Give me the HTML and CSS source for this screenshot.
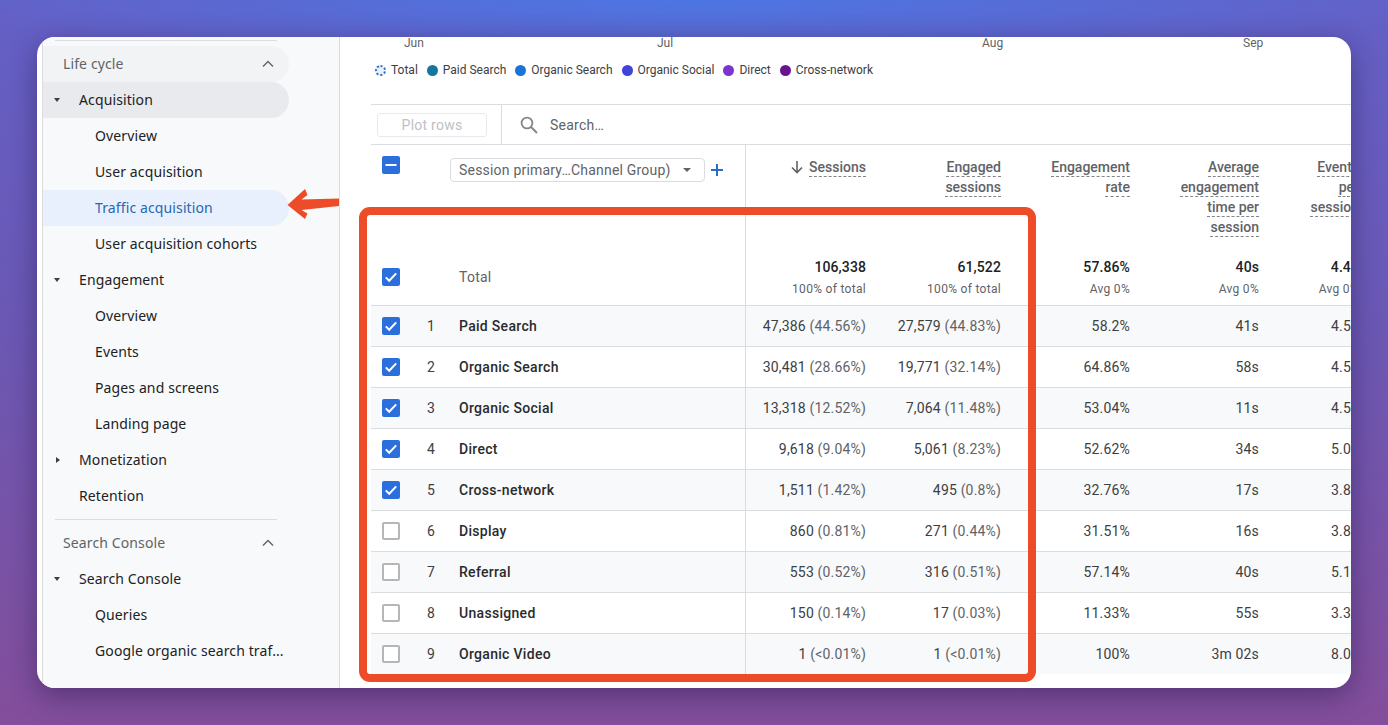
FILE: index.html
```html
<!DOCTYPE html>
<html>
<head>
  <meta charset="utf-8">
  <title>Traffic acquisition</title>
  <link rel="stylesheet" href="styles.css">
</head>
<body>

<svg width="0" height="0" class="defs">
  <symbol id="box-on" viewBox="0 0 18 18">
    <rect width="18" height="18" rx="2" fill="#2a6fdb"/>
    <path d="M3.8 9.4l3.4 3.4 7-7.4" fill="none" stroke="#fff" stroke-width="2"/>
  </symbol>
  <symbol id="box-mixed" viewBox="0 0 18 18">
    <rect width="18" height="18" rx="2" fill="#2a6fdb"/>
    <path d="M3.5 8h11v2h-11z" fill="#fff"/>
  </symbol>
  <symbol id="box-off" viewBox="0 0 18 18">
    <rect x="1" y="1" width="16" height="16" rx="1" fill="#fff" stroke="#b4b6b8" stroke-width="2"/>
  </symbol>
  <symbol id="chev-up" viewBox="0 0 12 8">
    <path d="M1 6.5l5-5 5 5" fill="none" stroke="#5f6368" stroke-width="1.4"/>
  </symbol>
</svg>

<div class="card">

  <aside class="sidebar">
    <div class="rule rule-top"></div>
    <div class="nav-row section section-open">Life cycle <svg class="chev"><use href="#chev-up"/></svg></div>
    <div class="nav-row level current"><span class="caret caret-down"></span>Acquisition</div>
    <div class="nav-row sub">Overview</div>
    <div class="nav-row sub">User acquisition</div>
    <div class="nav-row sub active">Traffic acquisition</div>
    <div class="nav-row sub">User acquisition cohorts</div>
    <div class="nav-row level"><span class="caret caret-down"></span>Engagement</div>
    <div class="nav-row sub">Overview</div>
    <div class="nav-row sub">Events</div>
    <div class="nav-row sub">Pages and screens</div>
    <div class="nav-row sub">Landing page</div>
    <div class="nav-row level"><span class="caret caret-right"></span>Monetization</div>
    <div class="nav-row level"><span class="caret"></span>Retention</div>
    <div class="rule rule-mid"></div>
    <div class="nav-row section">Search Console <svg class="chev"><use href="#chev-up"/></svg></div>
    <div class="nav-row level"><span class="caret caret-down"></span>Search Console</div>
    <div class="nav-row sub">Queries</div>
    <div class="nav-row sub">Google organic search traf...</div>
  </aside>

  <main class="main">
    <div class="months">
      <span>Jun</span>
      <span>Jul</span>
      <span>Aug</span>
      <span>Sep</span>
    </div>

    <div class="legend">
      <span class="legend-item"><i class="dot dot-total"></i>Total</span>
      <span class="legend-item"><i class="dot dot-paid"></i>Paid Search</span>
      <span class="legend-item"><i class="dot dot-organic"></i>Organic Search</span>
      <span class="legend-item"><i class="dot dot-social"></i>Organic Social</span>
      <span class="legend-item"><i class="dot dot-direct"></i>Direct</span>
      <span class="legend-item"><i class="dot dot-cross"></i>Cross-network</span>
    </div>

    <div class="report">
      <div class="toolbar">
        <div class="toolbar-left"><button class="plot-btn">Plot rows</button></div>
        <div class="search">
          <svg class="search-icon" viewBox="0 0 18 18"><circle cx="7" cy="7" r="5.4" fill="none" stroke="#80868b" stroke-width="1.8"/><path d="M11 11l6 6" stroke="#80868b" stroke-width="2"/></svg>
          Search…
        </div>
      </div>

      <div class="grid head">
        <div class="dim dim-head">
          <svg class="box box-head"><use href="#box-mixed"/></svg>
          <div class="select">Session primary…Channel Group) <span class="select-caret"></span></div>
          <svg class="plus" viewBox="0 0 14 14"><path d="M6 1h2v5h5v2h-5v5h-2v-5h-5v-2h5z" fill="#2a6fc4"/></svg>
        </div>
        <div class="col-title"><svg class="sort" viewBox="0 0 14 14"><path d="M7 1v11M2 7.5l5 5 5-5" fill="none" stroke="#5f6368" stroke-width="1.6"/></svg><u>Sessions</u></div>
        <div class="col-title"><u>Engaged</u><br><u>sessions</u></div>
        <div class="col-title"><u>Engagement</u><br><u>rate</u></div>
        <div class="col-title"><u>Average</u><br><u>engagement</u><br><u>time per</u><br><u>session</u></div>
        <div class="col-title"><u>Events</u><br><u>per</u><br><u>session</u></div>
      </div>

      <div class="grid total">
        <div class="dim"><svg class="box"><use href="#box-on"/></svg><span class="num"></span><span class="total-label">Total</span></div>
        <div class="sum">106,338<small>100% of total</small></div>
        <div class="sum">61,522<small>100% of total</small></div>
        <div class="sum">57.86%<small>Avg 0%</small></div>
        <div class="sum">40s<small>Avg 0%</small></div>
        <div class="sum">4.43<small>Avg 0%</small></div>
      </div>

      <div class="grid row shade">
        <div class="dim"><svg class="box"><use href="#box-on"/></svg><span class="num">1</span><span class="name">Paid Search</span></div>
        <div class="val">47,386 <em>(44.56%)</em></div>
        <div class="val">27,579 <em>(44.83%)</em></div>
        <div class="val">58.2%</div>
        <div class="val">41s</div>
        <div class="val">4.51</div>
      </div>
      <div class="grid row">
        <div class="dim"><svg class="box"><use href="#box-on"/></svg><span class="num">2</span><span class="name">Organic Search</span></div>
        <div class="val">30,481 <em>(28.66%)</em></div>
        <div class="val">19,771 <em>(32.14%)</em></div>
        <div class="val">64.86%</div>
        <div class="val">58s</div>
        <div class="val">4.54</div>
      </div>
      <div class="grid row shade">
        <div class="dim"><svg class="box"><use href="#box-on"/></svg><span class="num">3</span><span class="name">Organic Social</span></div>
        <div class="val">13,318 <em>(12.52%)</em></div>
        <div class="val">7,064 <em>(11.48%)</em></div>
        <div class="val">53.04%</div>
        <div class="val">11s</div>
        <div class="val">4.52</div>
      </div>
      <div class="grid row">
        <div class="dim"><svg class="box"><use href="#box-on"/></svg><span class="num">4</span><span class="name">Direct</span></div>
        <div class="val">9,618 <em>(9.04%)</em></div>
        <div class="val">5,061 <em>(8.23%)</em></div>
        <div class="val">52.62%</div>
        <div class="val">34s</div>
        <div class="val">5.03</div>
      </div>
      <div class="grid row shade">
        <div class="dim"><svg class="box"><use href="#box-on"/></svg><span class="num">5</span><span class="name">Cross-network</span></div>
        <div class="val">1,511 <em>(1.42%)</em></div>
        <div class="val">495 <em>(0.8%)</em></div>
        <div class="val">32.76%</div>
        <div class="val">17s</div>
        <div class="val">3.82</div>
      </div>
      <div class="grid row">
        <div class="dim"><svg class="box"><use href="#box-off"/></svg><span class="num">6</span><span class="name">Display</span></div>
        <div class="val">860 <em>(0.81%)</em></div>
        <div class="val">271 <em>(0.44%)</em></div>
        <div class="val">31.51%</div>
        <div class="val">16s</div>
        <div class="val">3.85</div>
      </div>
      <div class="grid row shade">
        <div class="dim"><svg class="box"><use href="#box-off"/></svg><span class="num">7</span><span class="name">Referral</span></div>
        <div class="val">553 <em>(0.52%)</em></div>
        <div class="val">316 <em>(0.51%)</em></div>
        <div class="val">57.14%</div>
        <div class="val">40s</div>
        <div class="val">5.12</div>
      </div>
      <div class="grid row">
        <div class="dim"><svg class="box"><use href="#box-off"/></svg><span class="num">8</span><span class="name">Unassigned</span></div>
        <div class="val">150 <em>(0.14%)</em></div>
        <div class="val">17 <em>(0.03%)</em></div>
        <div class="val">11.33%</div>
        <div class="val">55s</div>
        <div class="val">3.31</div>
      </div>
      <div class="grid row shade">
        <div class="dim"><svg class="box"><use href="#box-off"/></svg><span class="num">9</span><span class="name">Organic Video</span></div>
        <div class="val">1 <em>(&lt;0.01%)</em></div>
        <div class="val">1 <em>(&lt;0.01%)</em></div>
        <div class="val">100%</div>
        <div class="val">3m 02s</div>
        <div class="val">8.00</div>
      </div>
    </div>
  </main>

  <!-- annotations drawn over the screenshot -->
  <div class="highlight"></div>
  <svg class="arrow" viewBox="0 0 56 34"><path d="M2.500 18L20 2l2.500 6-6 4.500L54 11.500V19l-37.500 4 6 3.500L20 32z" fill="#ec4c27"/></svg>
</div>

</body>
</html>
```

FILE: styles.css
```css
html, body {
  margin: 0;
  height: 725px;
  overflow: hidden;
}

body {
  padding: 37px;
  box-sizing: border-box;
  font-family: Roboto, "Liberation Sans", sans-serif;
  font-size: 14px;
  color: #202124;
  background:
    radial-gradient(ellipse 55% 60px at 50% 0, #4c76e4 0, rgba(76, 118, 228, 0) 100%),
    linear-gradient(180deg, #6460c6 0, #6b58b4 45%, #834e9b 100%);
}

.defs {
  position: absolute;
}

.card {
  position: relative;
  display: flex;
  width: 1314px;
  height: 651px;
  background: #fff;
  border-radius: 18px;
  overflow: hidden;
  box-shadow: 0 8px 28px rgba(30, 20, 70, 0.45);
}

/* sidebar */
.sidebar {
  flex: none;
  box-sizing: border-box;
  width: 298px;
  margin-left: 5px;
  padding-top: 3px;
  background: #f8f9fa;
  border-left: 1px solid #dadce0;
  border-right: 1px solid #dadce0;
  font-family: "Noto Sans", Roboto, sans-serif;
  font-size: 14px;
  letter-spacing: 0.12px;
}

.rule {
  width: 222px;
  height: 1px;
  margin-left: 12px;
  background: #dadce0;
}

.rule-top {
  margin-bottom: 5px;
}

.rule-mid {
  margin-top: 5px;
  margin-bottom: 5px;
}

.nav-row {
  display: flex;
  align-items: center;
  box-sizing: border-box;
  width: 246px;
  height: 36px;
  padding-bottom: 2px;
  border-radius: 0 18px 18px 0;
  white-space: nowrap;
  color: #202124;
}

.section {
  padding-left: 20px;
  color: #5f6368;
}

.section-open {
  background: #f2f3f5;
}

.chev {
  width: 12px;
  height: 8px;
  margin-top: 2px;
  margin-left: auto;
  margin-right: 15px;
}

.level {
  padding-left: 11px;
}

.current {
  background: #e8eaed;
}

.sub {
  padding-left: 52px;
}

.active {
  background: #e8f0fe;
  color: #2b66b1;
}

.caret {
  flex: none;
  box-sizing: border-box;
  width: 25px;
  height: 0;
}

.caret-down {
  position: relative;
}

.caret-down::before {
  content: "";
  position: absolute;
  left: 0;
  top: -1px;
  border-left: 3.5px solid transparent;
  border-right: 3.5px solid transparent;
  border-top: 4px solid #3c4043;
}

.caret-right {
  position: relative;
}

.caret-right::before {
  content: "";
  position: absolute;
  left: 2px;
  top: -2.5px;
  border-top: 3.5px solid transparent;
  border-bottom: 3.5px solid transparent;
  border-left: 4px solid #3c4043;
}

/* chart footer */
.main {
  flex: 1;
  min-width: 0;
  overflow: hidden;
}

.months {
  display: grid;
  grid-template-columns: 253px 325px 261px auto;
  height: 13px;
  padding-left: 64px;
  font-size: 12px;
  line-height: 13px;
  color: #5f6368;
}

.legend {
  display: flex;
  align-items: center;
  height: 20px;
  margin: 10px 0 24px 35px;
  font-size: 12px;
  color: #3c4043;
}

.legend-item {
  display: flex;
  align-items: center;
  margin-right: 9px;
  white-space: nowrap;
}

.dot {
  width: 11px;
  height: 11px;
  margin-right: 5px;
  border-radius: 50%;
}

.dot-total {
  box-sizing: border-box;
  border: 2px dotted #2a6fc4;
  background: #e8f0fe;
}

.dot-paid { background: #12769e; }
.dot-organic { background: #1a73d9; }
.dot-social { background: #4144d4; }
.dot-direct { background: #7b35d0; }
.dot-cross { background: #6a1390; }

/* table */
.report {
  width: 990px;
  margin-left: 31px;
  border-top: 1px solid #dadce0;
}

.toolbar {
  display: flex;
  height: 39px;
  border-bottom: 1px solid #dadce0;
}

.toolbar-left {
  display: flex;
  align-items: center;
  box-sizing: border-box;
  width: 131px;
  padding-left: 6px;
  border-right: 1px solid #dadce0;
}

.plot-btn {
  width: 110px;
  height: 24px;
  padding: 0;
  background: #fff;
  border: 1px solid #e8eaed;
  border-radius: 3px;
  font-family: inherit;
  font-size: 14px;
  letter-spacing: 0.25px;
  color: #bdc1c6;
}

.search {
  display: flex;
  align-items: center;
  padding-left: 18px;
  letter-spacing: 0.25px;
  color: #5f6368;
}

.search-icon {
  width: 18px;
  height: 18px;
  margin-right: 12px;
}

.grid {
  display: grid;
  grid-template-columns: 375px 120px 135px 129px 129px 100px;
}

.dim {
  display: flex;
  align-items: center;
  box-sizing: border-box;
  padding-left: 11px;
  border-right: 1px solid #dadce0;
}

.box {
  flex: none;
  width: 18px;
  height: 18px;
}

.head {
  height: 100px;
}

.dim-head {
  align-items: flex-start;
}

.box-head {
  margin-top: 11px;
}

.select {
  display: flex;
  align-items: center;
  box-sizing: border-box;
  width: 255px;
  height: 24px;
  margin: 13px 0 0 50px;
  padding-left: 8px;
  border: 1px solid #dadce0;
  border-radius: 4px;
  letter-spacing: 0.2px;
  color: #5f6368;
  white-space: nowrap;
}

.select-caret {
  margin-left: auto;
  margin-right: 13px;
  border-left: 4px solid transparent;
  border-right: 4px solid transparent;
  border-top: 4px solid #5f6368;
}

.plus {
  width: 14px;
  height: 14px;
  margin: 18px 0 0 5px;
}

.col-title {
  padding-top: 12px;
  font-size: 14px;
  line-height: 20px;
  font-weight: 500;
  text-align: right;
  white-space: nowrap;
  color: #5f6368;
}

.col-title u {
  text-decoration: underline dashed #80868b 1px;
  text-underline-offset: 4px;
}

.sort {
  width: 14px;
  height: 14px;
  margin-right: 5px;
  vertical-align: -2px;
}

.total {
  height: 60px;
}

.total .dim {
  padding-top: 4px;
}

.total-label {
  color: #5f6368;
  letter-spacing: 0.25px;
}

.sum {
  padding-top: 12px;
  line-height: 20px;
  font-size: 14px;
  letter-spacing: 0.1px;
  font-weight: 500;
  text-align: right;
  white-space: nowrap;
}

.sum small {
  display: block;
  margin-top: 2px;
  font-size: 12px;
  font-weight: 400;
  letter-spacing: 0.3px;
  color: #5f6368;
}

.row {
  height: 41px;
  box-sizing: border-box;
  border-top: 1px solid #dadce0;
  align-items: stretch;
}

.shade {
  background: #f8f9fa;
}

.num {
  flex: none;
  width: 22px;
  margin: 0 17px 0 20px;
  text-align: center;
  color: #3c4043;
}

.name {
  font-weight: 500;
  letter-spacing: 0.3px;
  color: #2a2b2e;
}

.val {
  align-self: center;
  letter-spacing: 0.17px;
  text-align: right;
  white-space: nowrap;
  color: #3c4043;
}

.val em {
  font-style: normal;
  color: #5f6368;
}

/* annotations */
.highlight {
  position: absolute;
  left: 322px;
  top: 170px;
  box-sizing: border-box;
  width: 677px;
  height: 475px;
  border: 8px solid #ec4c27;
  border-radius: 11px;
  pointer-events: none;
}

.arrow {
  position: absolute;
  left: 248px;
  top: 150px;
  width: 56px;
  height: 34px;
}
```
